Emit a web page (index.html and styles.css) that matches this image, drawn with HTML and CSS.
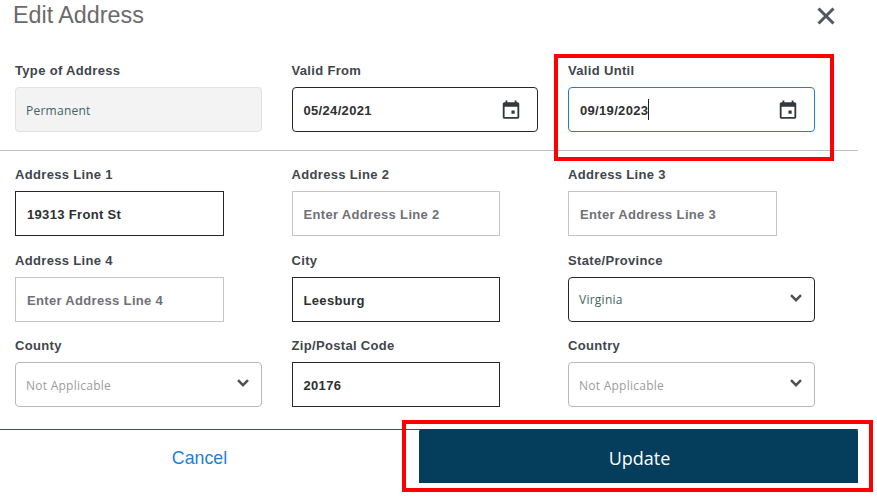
FILE: index.html
```html
<!DOCTYPE html>
<html lang="en">
<head>
<meta charset="utf-8">
<title>Edit Address</title>
<link rel="stylesheet" href="styles.css">
</head>
<body>
<main class="modal">
  <header class="head">
    <h1 class="title">Edit Address</h1>
    <svg class="close" viewBox="0 0 18 18" aria-label="Close"><path d="M1.5 1.5l15 15M16.500 1.500l-15 15"/></svg>
  </header>
  <section class="grid top">
    <div class="field">
      <div class="label">Type of Address</div>
      <div class="box rounded disabled"><span class="opt dark">Permanent</span></div>
    </div>
    <div class="field">
      <div class="label">Valid From</div>
      <div class="box rounded filled between"><span class="val">05/24/2021</span>
        <svg class="cal" viewBox="0 0 24 24"><path d="M16 1.500v2H8v-2H6v2H5c-1.110 0-1.990.9-1.990 2L3 19.500c0 1.100.89 2 2 2h14c1.100 0 2-.9 2-2V5.500c0-1.100-.9-2-2-2h-1v-2h-2zm3 18H5V8.500h14v11zM12.500 12.500h3.500V16h-3.500z"/></svg></div>
    </div>
    <div class="field">
      <div class="label">Valid Until</div>
      <div class="box rounded focus between"><span class="val caret">09/19/2023</span>
        <svg class="cal" viewBox="0 0 24 24"><path d="M16 1.500v2H8v-2H6v2H5c-1.110 0-1.990.9-1.990 2L3 19.500c0 1.100.89 2 2 2h14c1.100 0 2-.9 2-2V5.500c0-1.100-.9-2-2-2h-1v-2h-2zm3 18H5V8.500h14v11zM12.500 12.500h3.500V16h-3.500z"/></svg></div>
    </div>
  </section>
  <section class="grid rows">
    <div class="field">
      <div class="label">Address Line 1</div>
      <div class="box short filled"><span class="val">19313 Front St</span></div>
    </div>
    <div class="field">
      <div class="label">Address Line 2</div>
      <div class="box short empty"><span class="val ph">Enter Address Line 2</span></div>
    </div>
    <div class="field">
      <div class="label">Address Line 3</div>
      <div class="box short empty"><span class="val ph">Enter Address Line 3</span></div>
    </div>
    <div class="field">
      <div class="label">Address Line 4</div>
      <div class="box short empty"><span class="val ph">Enter Address Line 4</span></div>
    </div>
    <div class="field">
      <div class="label">City</div>
      <div class="box short filled"><span class="val">Leesburg</span></div>
    </div>
    <div class="field">
      <div class="label">State/Province</div>
      <div class="box rounded filled between"><span class="opt dark">Virginia</span>
        <svg class="chev" viewBox="0 0 12 8"><path d="M1 1.200l5 5 5-5"/></svg></div>
    </div>
    <div class="field">
      <div class="label">County</div>
      <div class="box rounded soft between"><span class="opt">Not Applicable</span>
        <svg class="chev" viewBox="0 0 12 8"><path d="M1 1.200l5 5 5-5"/></svg></div>
    </div>
    <div class="field">
      <div class="label">Zip/Postal Code</div>
      <div class="box short filled"><span class="val">20176</span></div>
    </div>
    <div class="field">
      <div class="label">Country</div>
      <div class="box rounded soft between"><span class="opt">Not Applicable</span>
        <svg class="chev" viewBox="0 0 12 8"><path d="M1 1.200l5 5 5-5"/></svg></div>
    </div>
  </section>
  <footer class="foot">
    <div class="cancel">Cancel</div>
    <div class="update">Update</div>
  </footer>
</main>
<div class="mark mark-until"></div>
<div class="mark mark-update"></div>
</body>
</html>
```

FILE: styles.css
```css
* { box-sizing: border-box; }
html, body { margin: 0; padding: 0; background: #fff; }
body { width: 877px; height: 503px; overflow: hidden; position: relative; font-family: "Liberation Sans", Arial, sans-serif; }
.modal { width: 858px; display: flex; flex-direction: column; }
.head { display: flex; justify-content: space-between; align-items: flex-start; height: 63px; padding: 1px 23px 0 13px; }
.title { margin: 0; font-size: 23.300px; line-height: 28px; font-weight: 400; color: #6a6a6a; }
.close { width: 18px; height: 18px; margin-top: 6px; fill: none; stroke: #4f5861; stroke-width: 3; }
.grid { display: grid; grid-template-columns: 246.5px 246.5px 247px; column-gap: 30px; padding-left: 15px; }
.top { height: 88px; border-bottom: 1px solid #bdbdbd; }
.rows { padding-top: 16px; row-gap: 16.5px; height: 278px; align-content: start; }
.field { display: flex; flex-direction: column; }
.label { height: 24px; font-size: 13px; line-height: 16px; font-weight: 700; letter-spacing: .33px; color: #40464c; white-space: nowrap; }
.box { height: 45px; width: 100%; display: flex; align-items: center; padding-left: 11px; background: #fff; }
.short { width: 208.5px; }
.between { justify-content: space-between; padding-right: 14px; }
.rounded { border-radius: 4px; }
.filled { border: 1px solid #26282a; }
.focus { border: 1px solid #1e7fd6; }
.empty { border: 1px solid #c4c4c4; }
.soft { border: 1px solid #b9b9b9; }
.disabled { border: 1px solid #e2e2e2; background: #f3f3f3; }
.val { padding-top: 3px; font-size: 13px; line-height: 18px; font-weight: 700; letter-spacing: .33px; color: #2e3032; white-space: nowrap; }
.ph { color: #6e7176; }
.caret { border-right: 1px solid #222; }
.opt { margin-left: -1px; padding-top: 2px; font-family: "Open Sans", sans-serif; font-size: 12px; line-height: 18px; letter-spacing: .25px; color: #9c9c9c; }
.dark { color: #3f6365; }
.cal { width: 22px; height: 22px; margin: 1px 1px 0 0; fill: #33383d; }
.chev { width: 12px; height: 8px; margin: -3px -2px 0 0; fill: none; stroke: #4f5255; stroke-width: 2.500; }
.foot { display: flex; align-items: flex-start; height: 55px; border-top: 1px solid #24587f; }
.cancel { width: 399px; padding-top: 17px; text-align: center; font-size: 17.800px; line-height: 22px; color: #1e7fd6; }
.update { flex: 1; height: 54px; margin-top: -1px; margin-left: 20px; padding: 4px 0 0 2px; display: flex; align-items: center; justify-content: center; background: #053d5c; border-radius: 3px 3px 0 0; font-family: "Open Sans", sans-serif; font-size: 18px; color: #fff; }
.mark { position: absolute; border: 4px solid #f00; }
.mark-until { left: 554px; top: 54px; width: 280px; height: 107px; }
.mark-update { left: 402px; top: 420px; width: 471px; height: 72px; }
```
